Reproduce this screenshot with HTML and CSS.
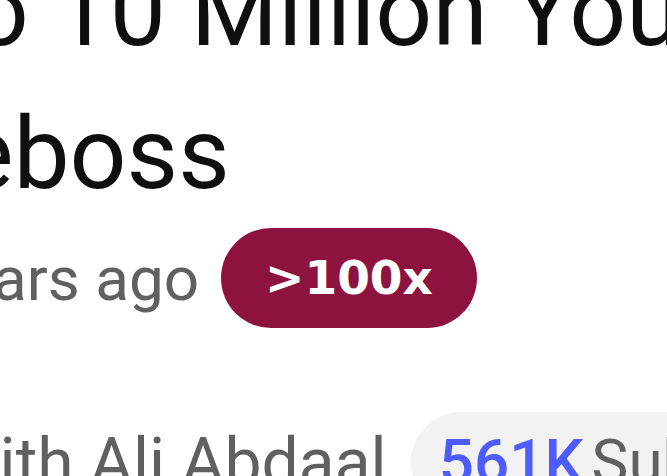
FILE: index.html
```html
<!DOCTYPE html>
<html>

<head>
    <title>Video details</title>
    <meta name="viewport" content="width=device-width, initial-scale=1.0">
    <link rel="stylesheet" href="styles.css">
</head>

<body>
    <div class="details">
        <h1 class="video-title">
            <span class="title-line first">to 10 Million YouTube Views</span>
            <span class="title-line second">Seboss</span>
        </h1>

        <div class="meta-row">
            <span class="meta-text">3 years ago</span>
            <span class="outlier-badge">&gt;100x</span>
        </div>

        <div class="channel-row">
            <span class="channel-name">with Ali Abdaal</span>
            <span class="subs-pill"><span class="subs-count">561K</span><span class="subs-label">Subscribers</span></span>
        </div>
    </div>
</body>

</html>
```

FILE: styles.css
```css
:root {
    --text-color: #0f0f0f;
    --muted-color: #606060;
    --badge-bg: #8e1240;
    --pill-bg: #f2f2f2;
    --accent-color: #4e5cff;
}

html,
body {
    margin: 0;
    height: 100%;
    overflow: hidden;
    background: #ffffff;
}

body {
    font-family: Roboto, 'Liberation Sans', sans-serif;
    color: var(--text-color);
}

.details {
    white-space: nowrap;
}

.video-title {
    margin: -61px 0 0;
    font-size: 100px;
    font-weight: 400;
    line-height: 143px;
}

.title-line {
    display: block;
}

.title-line.first {
    margin-left: -60px;
}

.title-line.second {
    margin-left: -99px;
}

.meta-row {
    display: flex;
    align-items: center;
    gap: 22px;
    margin: 3px 0 0 -119px;
}

.meta-text {
    font-size: 62px;
    color: var(--muted-color);
}

.outlier-badge {
    height: 100px;
    padding: 0 44px;
    border-radius: 50px;
    background: var(--badge-bg);
    color: #ffffff;
    font-family: 'DejaVu Sans', sans-serif;
    font-size: 47px;
    font-weight: 700;
    line-height: 100px;
}

.channel-row {
    display: flex;
    align-items: center;
    gap: 24px;
    margin: 84px 0 0 -50px;
    color: var(--muted-color);
}

.channel-name {
    font-size: 66px;
}

.subs-pill {
    height: 100px;
    padding: 0 28px;
    border-radius: 50px;
    background: var(--pill-bg);
    font-size: 62px;
    line-height: 100px;
}

.subs-count {
    color: var(--accent-color);
    font-weight: 500;
}

.subs-label {
    margin-left: 8px;
}
```
